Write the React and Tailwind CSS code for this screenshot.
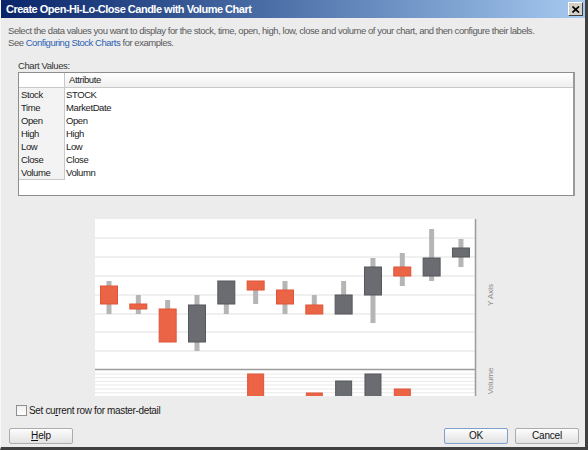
import React from 'react'

const candles = [
  { wick: [62, 95], body: [67, 85], up: false },
  { wick: [76, 95], body: [85, 90], up: false },
  { wick: [81, 90], body: [90, 123], up: false },
  { wick: [76, 132], body: [86, 123], up: true },
  { wick: [62, 95], body: [62, 85], up: true },
  { wick: [62, 85], body: [62, 71], up: false },
  { wick: [62, 95], body: [71, 85], up: false },
  { wick: [76, 95], body: [86, 95], up: false },
  { wick: [62, 95], body: [76, 95], up: true },
  { wick: [39, 104], body: [48, 76], up: true },
  { wick: [34, 67], body: [48, 57], up: false },
  { wick: [10, 62], body: [39, 57], up: true },
  { wick: [20, 48], body: [29, 38], up: true },
]

// index -> top of volume bar (chart bottom is clipped at 177)
const volumes = { 5: 155, 7: 174, 8: 162, 9: 155, 10: 170 }

const rows = [
  ['Stock', 'STOCK'],
  ['Time', 'MarketDate'],
  ['Open', 'Open'],
  ['High', 'High'],
  ['Low', 'Low'],
  ['Close', 'Close'],
  ['Volume', 'Volumn'],
]

function CandleChart() {
  const orange = '#ec6446'
  const orangeEdge = '#de5537'
  const gray = '#6a6c71'
  const grayEdge = '#55575b'
  const gridY = [19, 38, 57, 76, 95, 113, 132]
  const volGrid = [155, 158.7, 162.3, 166, 170, 173.7]

  return (
    <svg width="410" height="177" viewBox="0 0 410 177" className="block">
      <rect x="0" y="0" width="380" height="177" fill="#ffffff" />
      {gridY.map((y) => (
        <line key={y} x1="0" x2="380" y1={y} y2={y} stroke="#ebebeb" strokeWidth="1.5" />
      ))}
      {volGrid.map((y) => (
        <line key={y} x1="0" x2="380" y1={y} y2={y} stroke="#e9e9e9" strokeWidth="1" />
      ))}
      <line x1="0" x2="380" y1="150.5" y2="150.5" stroke="#9b9b9b" strokeWidth="1.5" />
      <line x1="380.5" x2="380.5" y1="0" y2="177" stroke="#9b9b9b" strokeWidth="1.5" />

      {candles.map((c, i) => {
        const cx = 14 + i * 29.33
        const fill = c.up ? gray : orange
        const edge = c.up ? grayEdge : orangeEdge
        return (
          <g key={i}>
            <rect x={cx - 2.5} y={c.wick[0]} width="5" height={c.wick[1] - c.wick[0]} fill="#b5b5b5" />
            <rect
              x={cx - 8.5}
              y={c.body[0]}
              width="17"
              height={c.body[1] - c.body[0]}
              fill={fill}
              stroke={edge}
              strokeWidth="1"
            />
          </g>
        )
      })}

      {Object.entries(volumes).map(([i, top]) => {
        const cx = 14 + Number(i) * 29.33
        const up = candles[i].up
        return (
          <rect
            key={i}
            x={cx - 8}
            y={top}
            width="16"
            height={177 - top + 2}
            fill={up ? gray : orange}
            stroke={up ? grayEdge : orangeEdge}
            strokeWidth="1"
          />
        )
      })}

      <text
        x="0"
        y="0"
        transform="translate(398 76) rotate(-90)"
        textAnchor="middle"
        fontSize="8"
        fill="#8a8a8a"
        fontFamily="Liberation Sans, Arial, sans-serif"
      >
        Y Axis
      </text>
      <text
        x="0"
        y="0"
        transform="translate(398 162) rotate(-90)"
        textAnchor="middle"
        fontSize="8"
        fill="#8a8a8a"
        fontFamily="Liberation Sans, Arial, sans-serif"
      >
        Volume
      </text>
    </svg>
  )
}

function Button({ children, primary }) {
  return (
    <button
      className={
        primary
          ? 'w-[64px] h-[16px] rounded-[2px] border border-[#7f9fcf] bg-gradient-to-b from-[#fdfdfd] to-[#e2e2e2] text-[10px] tracking-[-0.2px] leading-[14px] text-[#111]'
          : 'w-[64px] h-[16px] rounded-[2px] border border-[#acacac] bg-gradient-to-b from-[#fdfdfd] to-[#e2e2e2] text-[10px] tracking-[-0.2px] leading-[14px] text-[#111]'
      }
    >
      {children}
    </button>
  )
}

export default function App() {
  return (
    <div className="w-[588px] h-[450px] bg-[#ececec] flex flex-col border-l border-l-[#f8f8f8] border-r-[3px] border-r-[#404040] border-b-[3px] border-b-[#404040] font-['Liberation_Sans',Arial,sans-serif] overflow-hidden">
      <div className="h-[18px] shrink-0 bg-gradient-to-r from-[#0a246a] to-[#a6caf0] flex items-center justify-between pl-[5px] pr-[2px]">
        <span className="text-white font-bold text-[11px] leading-[14px] tracking-[-0.5px]">
          Create Open-Hi-Lo-Close Candle with Volume Chart
        </span>
        <div className="w-[15px] h-[14px] bg-[#d4d0c8] border-t border-l border-t-white border-l-white border-r border-b border-r-[#404040] border-b-[#404040] flex items-center justify-center">
          <svg width="8" height="7" viewBox="0 0 8 7">
            <path d="M0.5 0.5 L7 6.5 M7 0.5 L0.5 6.5" stroke="#000" strokeWidth="1.7" />
          </svg>
        </div>
      </div>

      <div className="mt-[7px] pl-[7px] text-[9.5px] tracking-[-0.46px] leading-[12px] text-[#5a5a5a] whitespace-nowrap">
        <p>
          Select the data values you want to display for the stock, time, open, high, low, close and volume of your
          chart, and then configure their labels.
        </p>
        <p>
          See <span className="text-[#2b5fb4]">Configuring Stock Charts</span> for examples.
        </p>
      </div>

      <div className="mt-[10px] ml-[17px] text-[9.5px] tracking-[-0.4px] leading-[13px] text-[#333]">Chart Values:</div>

      <div className="ml-[17px] w-[557px] h-[124px] shrink-0 bg-white border border-[#8d8d8d] border-r-2 border-r-[#9a9a9a] flex flex-col text-[9.5px] tracking-[-0.4px] text-[#1a1a1a]">
        <div className="h-[15px] flex border-b border-[#c9c9c9] bg-gradient-to-b from-white to-[#efefef]">
          <div className="w-[46px] border-r border-[#c9c9c9] bg-white" />
          <div className="pl-[4px] leading-[14px]">Attribute</div>
        </div>
        <div className="flex">
          <div className="w-[46px] bg-[#f3f3f3] border-r border-b border-[#c9c9c9]">
            {rows.map(([k]) => (
              <div key={k} className="h-[13px] leading-[13px] pl-[2px]">
                {k}
              </div>
            ))}
          </div>
          <div className="flex-1">
            {rows.map(([k, v]) => (
              <div key={k} className="h-[13px] leading-[13px] pl-[1px]">
                {v}
              </div>
            ))}
          </div>
        </div>
      </div>

      <div className="mt-[23px] ml-[94px] h-[177px] shrink-0">
        <CandleChart />
      </div>

      <label className="mt-[7px] ml-[15px] h-[14px] flex items-center gap-[2px] text-[10px] tracking-[-0.35px] text-[#1a1a1a]">
        <span className="w-[11px] h-[11px] border border-[#8f8f8f] bg-gradient-to-b from-[#f0f0f0] to-white" />
        <span>
          Set cu<span className="underline">r</span>rent row for master-detail
        </span>
      </label>

      <div className="mt-[11px] flex items-center pl-[8px] pr-[6px]">
        <Button>
          <span className="underline">H</span>elp
        </Button>
        <div className="flex-1" />
        <div className="flex gap-[7px]">
          <Button primary>OK</Button>
          <Button>Cancel</Button>
        </div>
      </div>
    </div>
  )
}
